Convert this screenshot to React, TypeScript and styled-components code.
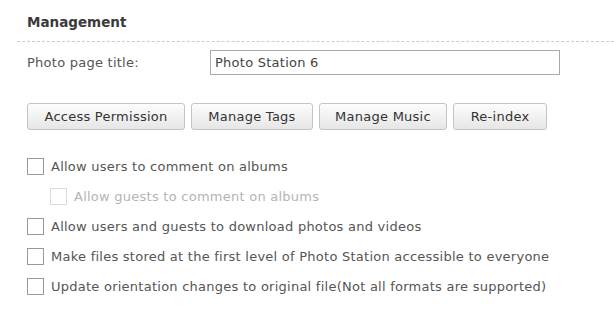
import React from "react";
import styled, { createGlobalStyle } from "styled-components";

const Global = createGlobalStyle`
  html, body { margin: 0; padding: 0; background: #fff; }
  body { font-family: "DejaVu Sans", Verdana, sans-serif; color: #555; letter-spacing: 0.25px; }
`;

const Page = styled.div`
  width: 614px;
  height: 309px;
  padding-left: 17px;
  box-sizing: border-box;
  overflow: hidden;
`;

const Title = styled.div`
  font-size: 13.5px;
  font-weight: bold;
  letter-spacing: 0;
  color: #3a3a3a;
  padding: 14px 0 0 10px;
  height: 41px;
  box-sizing: border-box;
  line-height: 17px;
`;

const Divider = styled.div`
  border-top: 1px dashed #ccc;
`;

const Body = styled.div`
  padding-left: 10px;
  padding-top: 8px;
`;

const FieldRow = styled.div`
  display: flex;
  align-items: center;
  height: 25px;
`;

const FieldLabel = styled.div`
  width: 183px;
  font-size: 13px;
`;

const TextInput = styled.input`
  width: 350px;
  height: 25px;
  box-sizing: border-box;
  border: 1px solid #aaa;
  padding: 0 4px;
  font-family: "DejaVu Sans", Verdana, sans-serif;
  letter-spacing: 0.25px;
  font-size: 13px;
  color: #444;
  outline: none;
`;

const Buttons = styled.div`
  display: flex;
  gap: 6px;
  margin-top: 28px;
`;

const Button = styled.button<{ $w: number }>`
  width: ${(p) => p.$w}px;
  height: 27px;
  box-sizing: border-box;
  border: 1px solid #c4c4c4;
  border-radius: 3px;
  background: linear-gradient(#fdfdfd, #e6e6e6);
  font-family: "DejaVu Sans", Verdana, sans-serif;
  letter-spacing: 0.25px;
  font-size: 13px;
  color: #333;
  padding: 0;
`;

const Checks = styled.div`
  display: flex;
  flex-direction: column;
  margin-top: 21px;
`;

const CheckRow = styled.label<{ $indent?: boolean; $disabled?: boolean }>`
  display: flex;
  align-items: center;
  height: 30px;
  padding-left: ${(p) => (p.$indent ? 23 : 0)}px;
  font-size: 13px;
  color: ${(p) => (p.$disabled ? "#b4b4b4" : "#555")};
`;

const Box = styled.span<{ $disabled?: boolean }>`
  width: 17px;
  height: 17px;
  box-sizing: border-box;
  border: 1px solid ${(p) => (p.$disabled ? "#dcdcdc" : "#999")};
  background: #fff;
  margin-right: 7px;
  flex-shrink: 0;
`;

const items: { text: string; indent?: boolean; disabled?: boolean }[] = [
  { text: "Allow users to comment on albums" },
  { text: "Allow guests to comment on albums", indent: true, disabled: true },
  { text: "Allow users and guests to download photos and videos" },
  { text: "Make files stored at the first level of Photo Station accessible to everyone" },
  { text: "Update orientation changes to original file(Not all formats are supported)" },
];

export default function App() {
  return (
    <>
      <Global />
      <Page>
        <Title>Management</Title>
        <Divider />
        <Body>
          <FieldRow>
            <FieldLabel>Photo page title:</FieldLabel>
            <TextInput defaultValue="Photo Station 6" />
          </FieldRow>
          <Buttons>
            <Button $w={158}>Access Permission</Button>
            <Button $w={122}>Manage Tags</Button>
            <Button $w={128}>Manage Music</Button>
            <Button $w={94}>Re-index</Button>
          </Buttons>
          <Checks>
            {items.map((it) => (
              <CheckRow key={it.text} $indent={it.indent} $disabled={it.disabled}>
                <Box $disabled={it.disabled} />
                {it.text}
              </CheckRow>
            ))}
          </Checks>
        </Body>
      </Page>
    </>
  );
}
